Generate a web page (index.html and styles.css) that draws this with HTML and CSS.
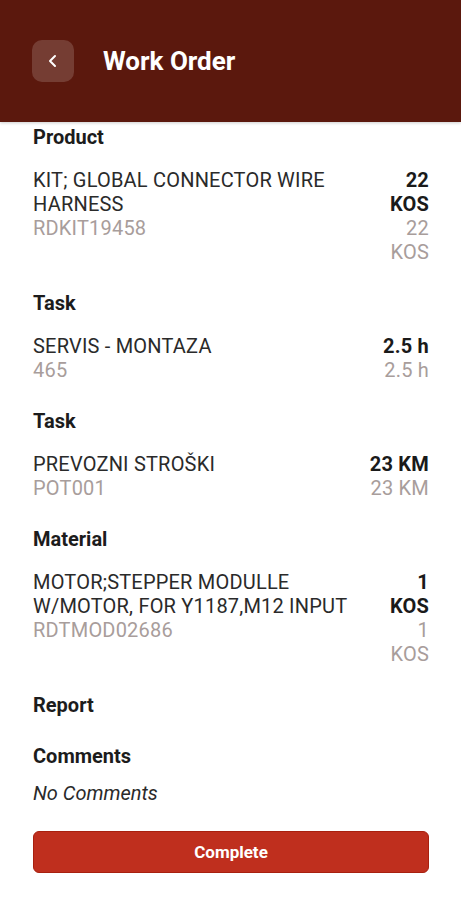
FILE: index.html
```html
<!DOCTYPE html>
<html lang="en">
<head>
<meta charset="utf-8">
<title>Work Order</title>
<link rel="stylesheet" href="styles.css">
</head>
<body>
<header class="appbar">
  <button class="back" aria-label="Back">
    <svg width="14" height="16" viewBox="0 0 14 16"><path d="M9 3 L4 8 L9 13" fill="none" stroke="#fff" stroke-width="2" stroke-linecap="round" stroke-linejoin="round"/></svg>
  </button>
  <h1 class="title">Work Order</h1>
</header>
<main class="content">
  <section class="section">
    <h2 class="heading">Product</h2>
    <div class="row">
      <div class="left">
        <div class="name">KIT; GLOBAL CONNECTOR WIRE HARNESS</div>
        <div class="sub">RDKIT19458</div>
      </div>
      <div class="right">
        <div class="qty">22 KOS</div>
        <div class="sub">22 KOS</div>
      </div>
    </div>
  </section>
  <section class="section">
    <h2 class="heading">Task</h2>
    <div class="row">
      <div class="left">
        <div class="name">SERVIS - MONTAZA</div>
        <div class="sub">465</div>
      </div>
      <div class="right">
        <div class="qty">2.5 h</div>
        <div class="sub">2.5 h</div>
      </div>
    </div>
  </section>
  <section class="section">
    <h2 class="heading">Task</h2>
    <div class="row">
      <div class="left">
        <div class="name">PREVOZNI STROŠKI</div>
        <div class="sub">POT001</div>
      </div>
      <div class="right">
        <div class="qty">23 KM</div>
        <div class="sub">23 KM</div>
      </div>
    </div>
  </section>
  <section class="section">
    <h2 class="heading">Material</h2>
    <div class="row">
      <div class="left">
        <div class="name">MOTOR;STEPPER MODULLE W/MOTOR, FOR Y1187,M12 INPUT</div>
        <div class="sub">RDTMOD02686</div>
      </div>
      <div class="right">
        <div class="qty">1 KOS</div>
        <div class="sub">1 KOS</div>
      </div>
    </div>
  </section>
  <section class="section">
    <h2 class="heading">Report</h2>
  </section>
  <section class="section comments">
    <h2 class="heading">Comments</h2>
    <p class="empty">No Comments</p>
  </section>
  <button class="complete">Complete</button>
</main>
</body>
</html>
```
FILE: styles.css
```css
* { box-sizing: border-box; }
html, body { margin: 0; padding: 0; background: #fff; }
body {
  font-family: Roboto, "Liberation Sans", sans-serif;
  color: #1f1f1f;
  width: 461px;
}
.appbar {
  height: 122px;
  background: #5b180d;
  display: flex;
  align-items: center;
  padding: 0 32px;
  gap: 29px;
  box-shadow: 0 1px 3px rgba(0,0,0,0.2);
  position: relative;
  z-index: 1;
}
.back {
  width: 42px;
  height: 42px;
  border-radius: 10px;
  border: 0;
  background: rgba(255,255,255,0.16);
  display: flex;
  align-items: center;
  justify-content: center;
  padding: 0;
}
.title {
  margin: 0;
  color: #fff;
  font-size: 26px;
  font-weight: 700;
  line-height: 30px;
}
.content {
  padding: 3px 32px 20px 33px;
  display: flex;
  flex-direction: column;
}
.section {
  display: flex;
  flex-direction: column;
  gap: 19px;
  margin-bottom: 27px;
}
.heading {
  margin: 0;
  font-size: 20px;
  font-weight: 700;
  line-height: 24px;
  color: #1c1c1c;
}
.row {
  display: flex;
  justify-content: space-between;
  gap: 16px;
  font-size: 20px;
  line-height: 24px;
  letter-spacing: 0.2px;
}
.left { flex: 0 1 auto; }
.right { flex: 0 1 auto; text-align: right; }
.name { color: #2a2a2a; }
.qty { font-weight: 700; color: #1a1a1a; }
.sub { color: #a89d9b; }
.comments { gap: 13px; margin-bottom: 26px; }
.empty {
  margin: 0;
  font-size: 20px;
  line-height: 24px;
  font-style: italic;
  color: #2a2a2a;
}
.complete {
  height: 42px;
  width: 100%;
  border: 1px solid #a8200f;
  border-radius: 6px;
  background: #bf2f1e;
  color: #fff;
  font-family: Roboto, "Liberation Sans", sans-serif;
  font-weight: 700;
  font-size: 17px;
}
```
